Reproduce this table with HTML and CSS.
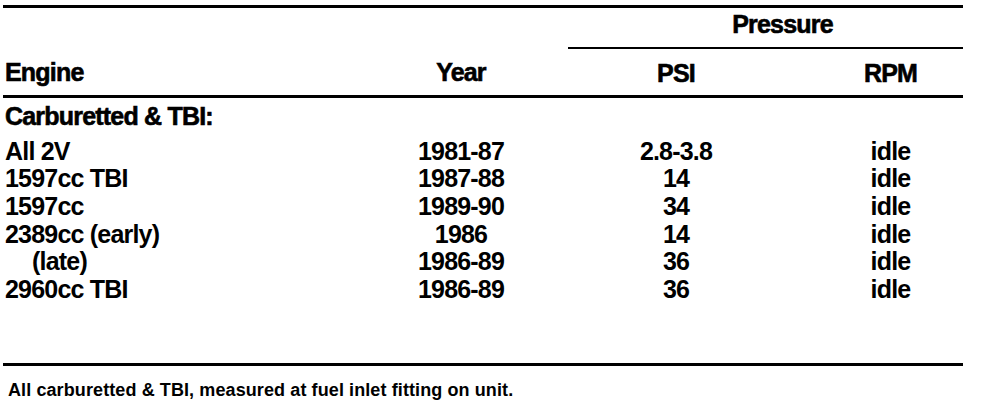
FILE: index.html
```html
<!DOCTYPE html>
<html lang="en">
<head>
    <meta charset="UTF-8">
    <meta name="viewport" content="width=device-width, initial-scale=1.0">
    <title>Fuel Pump Pressure</title>
    <link rel="stylesheet" href="styles.css">
</head>
<body>
    <div class="spec-sheet">
        <table class="spec-table">
            <colgroup>
                <col class="col-engine">
                <col class="col-year">
                <col class="col-psi">
                <col class="col-rpm">
            </colgroup>
            <thead>
                <tr class="group-row">
                    <th></th>
                    <th></th>
                    <th colspan="2" class="group-title">Pressure</th>
                </tr>
                <tr class="head-row">
                    <th class="engine">Engine</th>
                    <th class="year">Year</th>
                    <th class="psi">PSI</th>
                    <th class="rpm">RPM</th>
                </tr>
            </thead>
            <tbody>
                <tr class="section-row">
                    <td colspan="4" class="engine">Carburetted &amp; TBI:</td>
                </tr>
                <tr>
                    <td class="engine">All 2V</td>
                    <td class="year">1981-87</td>
                    <td class="psi">2.8-3.8</td>
                    <td class="rpm">idle</td>
                </tr>
                <tr>
                    <td class="engine">1597cc TBI</td>
                    <td class="year">1987-88</td>
                    <td class="psi">14</td>
                    <td class="rpm">idle</td>
                </tr>
                <tr>
                    <td class="engine">1597cc</td>
                    <td class="year">1989-90</td>
                    <td class="psi">34</td>
                    <td class="rpm">idle</td>
                </tr>
                <tr>
                    <td class="engine">2389cc (early)</td>
                    <td class="year">1986</td>
                    <td class="psi">14</td>
                    <td class="rpm">idle</td>
                </tr>
                <tr>
                    <td class="engine sub">(late)</td>
                    <td class="year">1986-89</td>
                    <td class="psi">36</td>
                    <td class="rpm">idle</td>
                </tr>
                <tr class="last-row">
                    <td class="engine">2960cc TBI</td>
                    <td class="year">1986-89</td>
                    <td class="psi">36</td>
                    <td class="rpm">idle</td>
                </tr>
            </tbody>
        </table>
        <p class="footnote">All carburetted &amp; TBI, measured at fuel inlet fitting on unit.</p>
    </div>
</body>
</html>
```

FILE: styles.css
```css
/* Page */
body {
    margin: 0;
    background-color: #ffffff;
    color: #000000;
}

.spec-sheet {
    padding: 5px 0 0 3px;
    width: 960px;
}

/* Table */
.spec-table {
    width: 960px;
    table-layout: fixed;
    border-collapse: collapse;
    border-top: 3px solid #000;
    border-bottom: 3px solid #000;
    font-family: "Liberation Sans", Arial, sans-serif;
    font-size: 25px;
    line-height: 27.6px;
    letter-spacing: -0.8px;
}

.col-engine { width: 357px; }
.col-year { width: 208px; }
.col-psi { width: 216px; }
.col-rpm { width: 179px; }

.spec-table th,
.spec-table td {
    padding: 0;
    font-weight: bold;
    white-space: nowrap;
}

.spec-table th {
    -webkit-text-stroke: 0.6px #000;
}

.engine {
    text-align: left;
    padding-left: 2px !important;
}

.engine.sub {
    padding-left: 29px !important;
}

.year {
    text-align: center;
    padding-right: 6px !important;
}

.psi {
    text-align: center;
}

.rpm {
    text-align: center;
    padding-left: 34px !important;
}

/* Header rows */
.group-row th {
    padding-top: 3px;
    padding-bottom: 8px;
}

.group-title {
    border-bottom: 2px solid #000;
    text-align: center;
    padding-left: 34px !important;
}

.head-row th {
    padding-top: 11px;
    padding-bottom: 8px;
    border-bottom: 3px solid #000;
}

/* Body rows */
.section-row td {
    padding-top: 5px;
    padding-bottom: 7px;
    -webkit-text-stroke: 0.6px #000;
}

.last-row td {
    padding-bottom: 60px;
}

/* Footnote */
.footnote {
    margin: 14px 0 0 5px;
    font-family: "Liberation Sans", Arial, sans-serif;
    font-size: 18px;
    font-weight: bold;
    letter-spacing: 0.1px;
}
```
